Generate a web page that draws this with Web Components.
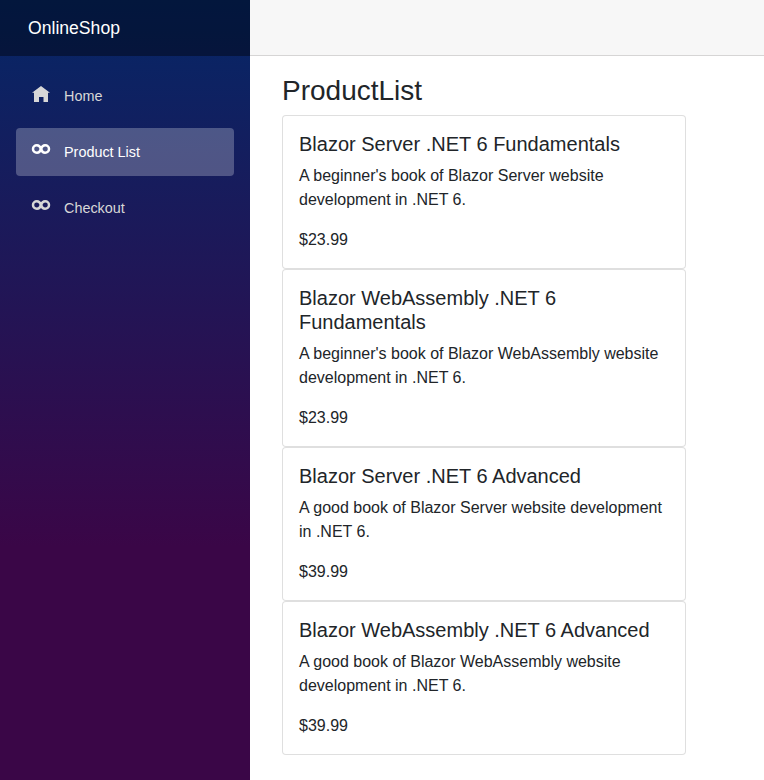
<!DOCTYPE html>
<html lang="en">
<head>
<meta charset="utf-8">
<title>ProductList</title>
<style>
  html, body { margin: 0; height: 100%; background: #fff; }
  body { font: 16px/1.5 "Liberation Sans", Arial, sans-serif; color: #212529; overflow: hidden; }
</style>
</head>
<body>
<shop-layout>
  <shop-nav slot="sidebar" brand="OnlineShop">
    <nav-item icon="home">Home</nav-item>
    <nav-item icon="infinity" active>Product List</nav-item>
    <nav-item icon="infinity">Checkout</nav-item>
  </shop-nav>
  <product-list heading="ProductList">
    <product-card name="Blazor Server .NET 6 Fundamentals" price="$23.99">A beginner's book of Blazor Server website development in .NET 6.</product-card>
    <product-card name="Blazor WebAssembly .NET 6 Fundamentals" price="$23.99">A beginner's book of Blazor WebAssembly website development in .NET 6.</product-card>
    <product-card name="Blazor Server .NET 6 Advanced" price="$39.99">A good book of Blazor Server website development in .NET 6.</product-card>
    <product-card name="Blazor WebAssembly .NET 6 Advanced" price="$39.99">A good book of Blazor WebAssembly website development in .NET 6.</product-card>
  </product-list>
</shop-layout>
<script>
  class ShadowElement extends HTMLElement {
    connectedCallback() {
      if (!this.shadowRoot) this.attachShadow({ mode: "open" }).innerHTML = this.render();
    }
  }

  customElements.define("shop-layout", class extends ShadowElement {
    render() {
      return `<style>
        :host { display: flex; height: 100vh; }
        .side { flex: 0 0 250px; background: linear-gradient(180deg, rgb(5, 39, 103) 0%, #3a0647 70%); }
        main { flex: 1; min-width: 0; }
        header { box-sizing: border-box; height: 56px; background: #f7f7f7; border-bottom: 1px solid #d6d5d5; }
        article { padding: 17.6px 24px 0 32px; }
      </style>
      <div class="side"><slot name="sidebar"></slot></div>
      <main><header></header><article><slot></slot></article></main>`;
    }
  });

  customElements.define("shop-nav", class extends ShadowElement {
    render() {
      return `<style>
        :host { display: block; }
        .brand { display: flex; align-items: center; height: 56px; box-sizing: border-box; padding-left: 28px;
                 background: rgba(0, 0, 0, .4); color: #fff; font-size: 17.6px; }
        nav { display: flex; flex-direction: column; gap: 8px; padding: 16px; }
      </style>
      <div class="brand">${this.getAttribute("brand")}</div>
      <nav><slot></slot></nav>`;
    }
  });

  const ICONS = {
    home: `<svg width="18" height="16" viewBox="0 0 18 16"><path d="M9 0 0 6.8h2V16h5v-5h4.500v5H16V6.800h2z"/></svg>`,
    infinity: `<svg class="ring" width="20" height="11" viewBox="0 0 20 11"><path d="M10 5C9.300 2.900 8 1.300 5.900 1.300C3.700 1.300 2 2.900 2 5S3.700 8.700 5.900 8.700C8 8.700 9.300 7.100 10 5C10.700 2.900 12 1.300 14.100 1.300C16.300 1.300 18 2.900 18 5S16.300 8.700 14.100 8.700C12 8.700 10.700 7.100 10 5z"/></svg>`
  };

  customElements.define("nav-item", class extends ShadowElement {
    render() {
      return `<style>
        :host { display: flex; height: 48px; box-sizing: border-box; padding-left: 16px; border-radius: 4px;
                color: #d7d7d7; font-size: 14.4px; line-height: 48px; }
        :host([active]) { background: rgba(255, 255, 255, .25); color: #fff; }
        .icon { width: 32px; padding-top: 14px; box-sizing: border-box; line-height: 0; }
        svg { display: block; fill: currentColor; }
        .ring { margin: 2px 0 0 -1px; fill: none; stroke: currentColor; stroke-width: 2.500; }
      </style>
      <span class="icon">${ICONS[this.getAttribute("icon")]}</span><span><slot></slot></span>`;
    }
  });

  customElements.define("product-list", class extends ShadowElement {
    render() {
      return `<style>
        :host { display: block; width: 404px; }
        h3 { margin: 0 0 8px; font-size: 28px; font-weight: 400; line-height: 1.2; }
      </style>
      <h3>${this.getAttribute("heading")}</h3><slot></slot>`;
    }
  });

  customElements.define("product-card", class extends ShadowElement {
    render() {
      return `<style>
        :host { display: block; box-sizing: border-box; padding: 16px; background: #fff;
                border: 1px solid rgba(0, 0, 0, .125); border-radius: 4px; }
        h5 { margin: 0 0 8px; font-size: 20px; font-weight: 400; line-height: 1.2; }
        p { margin: 0 0 16px; }
        p:last-child { margin-bottom: 0; }
      </style>
      <h5>${this.getAttribute("name")}</h5><p><slot></slot></p><p>${this.getAttribute("price")}</p>`;
    }
  });
</script>
</body>
</html>
